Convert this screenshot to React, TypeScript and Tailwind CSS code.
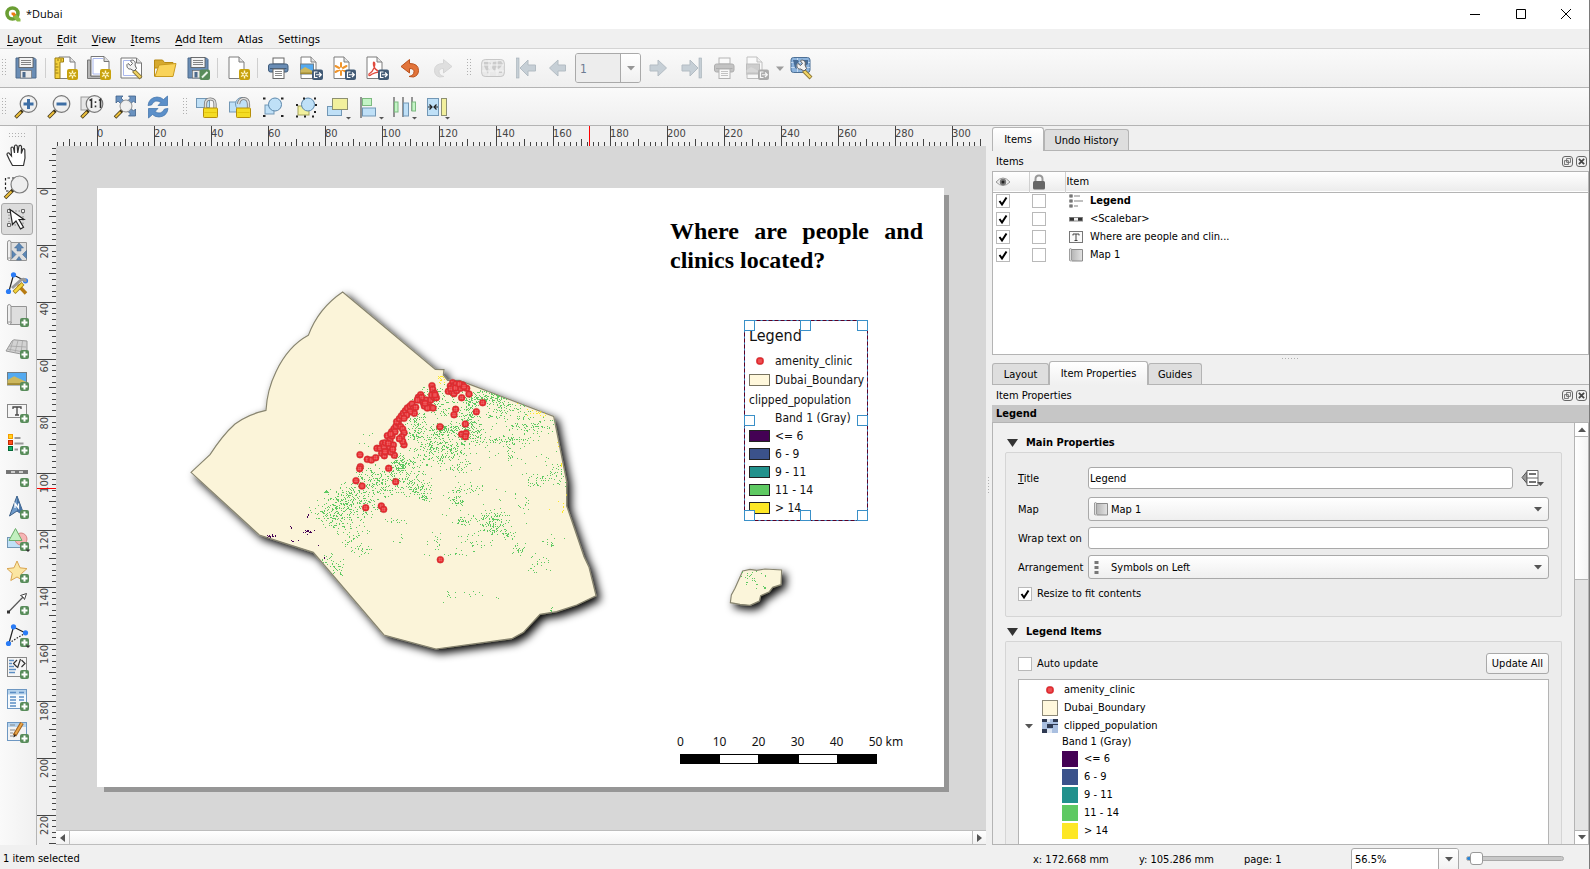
import React, { useLayoutEffect, useRef, useState } from "react";

const UI = "font-['DejaVu_Sans_Condensed','DejaVu_Sans',sans-serif]";

/* ---------- shared icon pieces ---------- */

type Kids = { children?: React.ReactNode; size?: string };

function Svg({ children, size = "size-6" }: Kids) {
  return (
    <svg viewBox="0 0 24 24" className={`${size} shrink-0 overflow-visible`} fill="none" aria-hidden="true">
      {children}
    </svg>
  );
}

const Plus = () => (
  <g>
    <rect x="15" y="15" width="9" height="9" rx="2" fill="#588c5a" />
    <path d="M19.5 16.5v6M16.5 19.5h6" stroke="#fff" strokeWidth="2" />
  </g>
);

const Star = () => (
  <g>
    <rect x="13" y="13" width="11" height="11" rx="2" fill="#c8a20e" />
    <path d="M18.5 14.5v8M15 16.5l7 4M22 16.5l-7 4" stroke="#fff6c8" strokeWidth="1.4" />
    <circle cx="18.5" cy="18.5" r="1.6" fill="#c8a20e" stroke="#fff6c8" strokeWidth="1" />
  </g>
);

const Export = () => (
  <g>
    <rect x="13" y="13.500" width="11" height="10.500" rx="2" fill="#415a75" />
    <path d="M18.500 16h-3v5.500h3M17 18.750h5M20 16.500l2.300 2.250L20 21" stroke="#fff" strokeWidth="1.2" />
  </g>
);

const Sheet = ({ x = 3, w = 15 }: { x?: number; w?: number }) => (
  <g>
    <path d={`M${x} 1h${w - 5}l5 5v16.500h-${w}z`} fill="#fff" stroke="#7d7d7d" />
    <path d={`M${x + w - 5} 1v5h5`} fill="#e4e4e4" stroke="#7d7d7d" />
  </g>
);

const Floppy = () => (
  <g>
    <path d="M2 2h18.500L22 3.500V22H2z" fill="#6a8db5" stroke="#4c6a8c" />
    <rect x="5" y="1.500" width="14" height="10" fill="#f3f3f3" stroke="#555" strokeWidth=".8" />
    <path d="M7 4.500h10M7 6.500h10M7 8.500h10" stroke="#777" strokeWidth=".9" />
    <rect x="6.500" y="14.500" width="11" height="7.500" fill="#e9e9e9" stroke="#666" strokeWidth=".6" />
    <rect x="8.500" y="16" width="3" height="5.500" fill="#4c6a8c" />
  </g>
);

const Wrench = () => (
  <g>
    <path d="M13.500 14.500l7.500 7.500" stroke="#8a7430" strokeWidth="4" />
    <path d="M14 15l6.500 6.500" stroke="#f0d264" strokeWidth="2.400" />
    <path d="M7 8.500l1-1 2.500 2 2-2-2-2.500 1-1c3 0 4.500 2.500 3.500 5l1.500 3.500-2.500 2.500-3.500-2c-2.500.5-4-2-3.500-4.500z" fill="#f2f2f2" stroke="#606060" />
  </g>
);

const Lens = () => (
  <g>
    <path d="M1.500 22.500l7-7" stroke="#413618" strokeWidth="3.600" />
    <path d="M2 22l5-5" stroke="#ecc03c" strokeWidth="2" />
    <circle cx="14.500" cy="9" r="8.300" fill="#eee" stroke="#777" strokeWidth="1.200" />
    <circle cx="13" cy="7" r="5" fill="#fafafa" opacity=".7" />
  </g>
);

const Caret = () => <path d="M19 22h5l-2.500 2.500z" fill="#555" />;

const Printer = () => (
  <g>
    <rect x="7" y="2" width="11" height="6" fill="#fff" stroke="#666" />
    <rect x="2.500" y="8" width="19.500" height="8" rx="2" fill="#6a8db5" stroke="#3f5c7c" />
    <path d="M4 12.500h16.500" stroke="#3f5c7c" />
    <rect x="7" y="13" width="11" height="9.500" fill="#fff" stroke="#666" />
    <path d="M9 15.500h7M9 17.500h7M9 19.500h7" stroke="#888" />
  </g>
);

const Photo = ({ x, y, w, h }: { x: number; y: number; w: number; h: number }) => (
  <g>
    <rect x={x} y={y} width={w} height={h} fill="#54aaf0" stroke="#6f7d86" />
    <path d={`M${x} ${y + h * 0.6}L${x + w * 0.35} ${y + h * 0.3}L${x + w} ${y + h * 0.75}V${y + h}H${x}z`} fill="#cdb85e" />
    <path d={`M${x} ${y + h * 0.85}h${w}V${y + h}H${x}z`} fill="#a08a34" />
  </g>
);

const Arrow = ({ d }: { d: string }) => <path d={d} fill="#c6cfd6" stroke="#b3bcc3" />;

const MapSheet = () => (
  <g>
    <path d="M6 3.500h15.500V21.500H5" fill="#dedede" stroke="#949494" />
    <path d="M2.500 3.500q0-2 1.700-2t1.800 2V19H3.500q-1 0-1 1.500z" fill="#efefef" stroke="#949494" />
    <path d="M2.500 3.500V20q.5 1.500 2 1.500T6.500 19" stroke="#949494" />
  </g>
);

const WorldMap = () => (
  <g>
    <rect x=".7" y="3.500" width="22.600" height="17" rx="3.500" fill="#dcdedf" stroke="#8f8f8f" />
    <path d="M3 6h6l1 2-3 3 2 3-2 4-2-4-2-4zM12 6l8-1 2 3-3 4-2 1-2-2-1 5-3-4zM18 15h3v2h-3z" fill="#96999b" />
    <path d="M1 9h22M1 15h22M8 4v16M16 4v16" stroke="#f4f4f4" strokeWidth="1" />
  </g>
);

const Nodes = ({ dotted = true }: { dotted?: boolean }) => (
  <g>
    <path d="M8.500 4L4 20M8.500 4l12 6" stroke="#222" strokeWidth="1.200" />
    {dotted && <path d="M4 20l16.500-10" stroke="#222" strokeWidth="1.200" strokeDasharray="1.500 1.500" />}
    <circle cx="8.500" cy="3.800" r="2.600" fill="#2a7cf6" />
    <circle cx="20.500" cy="9.800" r="2.600" fill="#2a7cf6" />
    <circle cx="3.500" cy="20.500" r="2.600" fill="#2a7cf6" />
  </g>
);

const Padlock = ({ open = false }: { open?: boolean }) => (
  <g>
    <path d={open ? "M10.500 9q1-5.500 5-5.500 5 0 5 6v3" : "M10.500 13V9q0-5 4.800-5t4.700 5v4"} stroke="#777" strokeWidth="3.200" />
    <path d={open ? "M10.500 9q1-5.500 5-5.500 5 0 5 6v3" : "M10.500 13V9q0-5 4.800-5t4.700 5v4"} stroke="#ddd" strokeWidth="1.600" />
    <rect x="8.500" y="13" width="14" height="9.500" rx=".8" fill="#f4dc23" stroke="#b58e0b" />
    <path d="M9.500 17.500h12" stroke="#e4c60c" strokeWidth="1" />
  </g>
);

/* ---------- toolbar definitions ---------- */

type Tool = { name: string; icon: React.ReactNode; active?: boolean; dim?: boolean };

const fileTools: Tool[] = [{ name: "Save Project", icon: <Floppy /> }];

const layoutTools: Tool[] = [
  {
    name: "New Layout",
    icon: (
      <g>
        <Sheet x={5} w={16} />
        <path d="M1 2h8.500v4H6v16.500H1z" fill="#f4d13c" stroke="#9c7e10" />
        <path d="M1.500 8h2M1.500 11h3M1.500 14h2M1.500 17h3M4 3v2M7 3v2" stroke="#80660a" strokeWidth=".8" />
        <Star />
      </g>
    ),
  },
  {
    name: "Duplicate Layout",
    icon: (
      <g>
        <path d="M.500 4h3v16h14v2.500H.500z" fill="#b5b5b5" stroke="#777" />
        <path d="M4 .500h13l5 5V20H4z" fill="#fff" stroke="#777" />
        <path d="M6 2.500h10M6 2.500V18h12" stroke="#aab8ee" />
        <path d="M17 .500v5h5" fill="#ddd" stroke="#777" />
        <Star />
      </g>
    ),
  },
  {
    name: "Layout Manager",
    icon: (
      <g>
        <path d="M1 2h15.500l5 5V22H1z" fill="#fff" stroke="#777" />
        <path d="M3.500 4.500H14M3.500 4.500V19.500H19" stroke="#aab8ee" />
        <path d="M16.500 2v5h5" fill="#ddd" stroke="#777" />
        <Wrench />
      </g>
    ),
  },
  {
    name: "Add Items from Template",
    icon: (
      <g>
        <path d="M1.500 4h8l2 2.500H20V12H1.500z" fill="#d6a92e" stroke="#b68914" />
        <path d="M2 20.500L6 9l17-1.500-3 13z" fill="#f9d35a" stroke="#c99b20" />
        <path d="M1.500 6v14.500" stroke="#b68914" />
      </g>
    ),
  },
  {
    name: "Save as Template",
    icon: (
      <g>
        <Floppy />
        <rect x="13.500" y="13.500" width="10.500" height="10.500" rx="2" fill="#588c5a" />
        <path d="M16 21.500l5.500-5.500" stroke="#e8f3e8" strokeWidth="2" />
      </g>
    ),
  },
];

const pageTools: Tool[] = [
  { name: "Add Pages", icon: <g><Sheet x={3} /><Star /></g> },
];

const exportTools: Tool[] = [
  { name: "Print Layout", icon: <Printer /> },
  { name: "Export as Image", icon: <g><Sheet x={2} /><Photo x={1.5} y={8} w={13} h={10} /><Export /></g> },
  {
    name: "Export as SVG",
    icon: (
      <g>
        <Sheet x={2} />
        <path d="M9 7v12M3.500 10l11 6M14.500 10l-11 6" stroke="#f0952c" strokeWidth="2" strokeLinecap="round" />
        <circle cx="9" cy="13" r="1.400" fill="#fff" />
        <Export />
      </g>
    ),
  },
  {
    name: "Export as PDF",
    icon: (
      <g>
        <Sheet x={2} />
        <path d="M4 18q3.500-2 5-6 1.500-4 .3-5.500T8.500 9q1 5 6 6.500 2 .5 1.500 1-2-1-6 .3T5 19.500q-1.500.5-1-1.500z" stroke="#e04a3e" strokeWidth="1.300" />
        <Export />
      </g>
    ),
  },
  {
    name: "Undo",
    icon: <path d="M3 10.500l8.500-7v4q9 0 9 7 0 5-5 6.500l-4.500-.5q5-1 5-5 0-3-4.500-3v4.500z" fill="#e2743a" stroke="#b9501c" />,
  },
  {
    name: "Redo",
    dim: true,
    icon: <path d="M21 10.500l-8.500-7v4q-9 0-9 7 0 5 5 6.500l4.500-.5q-5-1-5-5 0-3 4.500-3v4.500z" fill="#c2c6c2" stroke="#aab0aa" />,
  },
];

const atlasTools: Tool[] = [
  { name: "Preview Atlas", dim: true, icon: <WorldMap /> },
  { name: "First Feature", icon: <g><rect x="2.500" y="2" width="2.500" height="20" fill="#c6cfd6" stroke="#a2adb5" strokeWidth=".6" /><Arrow d="M6 12L14 4v5h7.500v6H14v5z" /></g> },
  { name: "Previous Feature", icon: <Arrow d="M2.500 12L11 4v5h7.500v6H11v5z" /> },
];

const atlasTools2: Tool[] = [
  { name: "Next Feature", icon: <Arrow d="M20.500 12L12 4v5H4v6h8v5z" /> },
  { name: "Last Feature", icon: <g><rect x="20" y="2" width="2.500" height="20" fill="#c6cfd6" stroke="#a2adb5" strokeWidth=".6" /><Arrow d="M19 12L11 4v5H3v6h8v5z" /></g> },
  { name: "Print Atlas", dim: true, icon: <Printer /> },
  {
    name: "Export Atlas",
    dim: true,
    icon: <g><Sheet x={2} /><Photo x={1.5} y={8} w={13} h={10} /><Export /><path d="M31 10.500h8l-4 4.500z" fill="#333" /></g>,
  },
  {
    name: "Atlas Settings",
    icon: (
      <g>
        <rect x="1" y="1.500" width="19" height="15" rx="2.500" fill="#8cb3dc" stroke="#4d7096" />
        <path d="M1 6.500h19M1 11.500h19M7.500 2v14" stroke="#dceaf8" strokeWidth=".7" />
        <path d="M3 4h5l1 2-3 3 1 4-2-1zM11 4h7v4l-4 3z" fill="#486c94" />
        <Wrench />
      </g>
    ),
  },
];

const zoomTools: Tool[] = [
  { name: "Zoom In", icon: <g><Lens /><path d="M14.500 4v10M9.500 9h10" stroke="#3d6ea5" strokeWidth="3" /></g> },
  { name: "Zoom Out", icon: <g><Lens /><path d="M9.500 9h10" stroke="#3d6ea5" strokeWidth="3" /></g> },
  {
    name: "Zoom to 100%",
    icon: (
      <g>
        <rect x="1" y="2" width="12" height="13" fill="#e6e6e6" stroke="#999" />
        <Lens />
        <path d="M9.500 5.500l2-1.200V13M19 5.500l1.500-1.200V13" stroke="#333" strokeWidth="1.600" />
        <path d="M15.500 6.200v1.800M15.500 10.500v1.800" stroke="#333" strokeWidth="1.600" />
      </g>
    ),
  },
  {
    name: "Zoom Full",
    icon: (
      <g>
        <path d="M3 1h7L8 3l3 3-3 3-3-3-2 2zM22.500 1h-7l2 2-3 3 3 3 3-3 2 2zM22.500 21h-7l2-2-3-3 3-3 3 3 2-2z" fill="#6a92c0" stroke="#3f6189" strokeWidth=".8" />
        <path d="M2 22.500l7-7" stroke="#413618" strokeWidth="3.600" />
        <path d="M2.500 22l5-5" stroke="#ecc03c" strokeWidth="2" />
        <circle cx="13" cy="11" r="6" fill="#f0f0f0" stroke="#888" opacity=".9" />
      </g>
    ),
  },
  {
    name: "Refresh View",
    icon: (
      <g fill="#5b8fc9" stroke="#3b6ea8" strokeWidth=".7">
        <path d="M2 10.500Q3 2.500 11 2q4 0 6.500 2.500L21.500 1v9.500H12L15 7.500Q9 3.500 5.500 10z" />
        <path d="M22 13.500q-1 8-9 8.500-4 0-6.500-2.500L2.500 23v-9.500H12L9 16.500q6 4 9.500-2.500z" />
      </g>
    ),
  },
];

const BlueBox = (p: { x: number; y: number; w: number; h: number }) => (
  <rect x={p.x} y={p.y} width={p.w} height={p.h} fill="#bfe0f7" stroke="#7297b5" />
);

const Corners = () => (
  <path d="M2 3.500h2.500M20 3.500h2.500M2 21h2.500M20 21h2.500" stroke="#222" strokeWidth="2" />
);

const arrangeTools: Tool[] = [
  { name: "Lock Selected Items", icon: <g><BlueBox x={1.5} y={3.5} w={13} h={9} /><Padlock /></g> },
  { name: "Unlock All Items", icon: <g><BlueBox x={1.5} y={7} w={11} h={10} /><circle cx="14" cy="9" r="6.500" fill="#bfe0f7" stroke="#7297b5" /><Padlock open /></g> },
  { name: "Group", icon: <g><BlueBox x={4} y={10} w={9} h={9} /><circle cx="14" cy="9.500" r="6.500" fill="#bfe0f7" stroke="#5c88ac" /><Corners /></g> },
  {
    name: "Ungroup",
    icon: (
      <g>
        <rect x="4" y="11" width="11" height="9" fill="#f2f09d" stroke="#a3a25a" />
        <circle cx="14" cy="9.500" r="6.500" fill="#bfe0f7" stroke="#5c88ac" />
        <path d="M2 10h2M2 21.500h2M9 3.500h2M20 3.500h2M20 17h2M18 21.500h2M10 21.500h2M21 10h2" stroke="#222" strokeWidth="2" />
      </g>
    ),
  },
  { name: "Raise", icon: <g><BlueBox x={.5} y={11.5} w={14} h={9} /><rect x="5.500" y="3.500" width="15" height="11" fill="#f2f09d" stroke="#8d9071" /><Caret /></g> },
  { name: "Align", icon: <g><path d="M1 2v21" stroke="#333" /><rect x="2.500" y="3.500" width="9" height="7" fill="#c4f4c6" stroke="#7dba80" /><BlueBox x={2.5} y={13} w={13} h={8} /><Caret /></g> },
  {
    name: "Distribute",
    icon: <g><path d="M1 2v20M10 2v20M19 2v14" stroke="#333" /><rect x="1.500" y="7" width="3.500" height="10" fill="#c4f4c6" stroke="#7dba80" /><BlueBox x={10.5} y={8} w={5} h={13} /><rect x="19" y="7" width="3.500" height="9" fill="#c4f4c6" stroke="#7dba80" /><Caret /></g>,
  },
  {
    name: "Resize",
    icon: <g><BlueBox x={1.5} y={3.5} w={11} h={17} /><path d="M2 12h3.500M12 12H8.500M3.500 9.500L6 12l-2.500 2.500M10.500 9.500L8 12l2.500 2.500" stroke="#222" strokeWidth="1.200" /><rect x="15.500" y="3.500" width="5" height="17" fill="#f2f09d" stroke="#8d9071" /><Caret /></g>,
  },
];

const HAND =
  "M7.500 22.500L4.500 17 2 11.500q0-2 2-1.500L6.500 13 6 5q1-2 2.500 0L9.500 10V3q1.500-2 2.700 0l.5 7 1.300-7q1.500-1.500 2.500.500L16.300 10.500 17.800 6q1.500-1 2 .8L20 15l-1.500 7.500z";

const toolbox: Tool[] = [
  { name: "Pan Layout", icon: <path d={HAND} fill="#fff" stroke="#333" strokeWidth="1.200" /> },
  {
    name: "Zoom",
    icon: (
      <g>
        <path d="M14 3H.500v13H8" stroke="#222" strokeWidth="1.200" strokeDasharray="2.500 2" />
        <path d="M0 23l8-8" stroke="#413618" strokeWidth="3.600" />
        <path d="M.500 22.500l6-6" stroke="#ecc03c" strokeWidth="2" />
        <circle cx="14.500" cy="9.500" r="8.500" fill="#eee" stroke="#777" strokeWidth="1.200" opacity=".95" />
      </g>
    ),
  },
  {
    name: "Select/Move Item",
    active: true,
    icon: (
      <g>
        <path d="M4 4h14v14H4z" stroke="#777" strokeDasharray="1.200 2" />
        <path d="M2.500 2.500h3v3h-3zM16.500 2.500h3v3h-3zM2.500 16.500h3v3h-3z" fill="#eee" stroke="#666" />
        <path d="M5 2.500l2.500 15 3.500-3.500 4.500 8 3-1.800L14 12.500h5z" fill="#fff" stroke="#222" strokeWidth="1.200" />
      </g>
    ),
  },
  {
    name: "Move Content",
    icon: (
      <g>
        <MapSheet />
        <path d="M14 4l4.500 5H16v3h-4V9H9.500zM7 11.500l4 4-4 4zM21.500 11.500l-4 4 4 4zM14 17.500l2.500 3.500h-5z" fill="#5b86b5" stroke="#3d6288" strokeWidth=".5" />
      </g>
    ),
  },
  {
    name: "Edit Nodes",
    icon: (
      <g>
        <Nodes dotted={false} />
        <path d="M7 17l9-8q5-2 4 2" stroke="#999" strokeWidth="3" />
        <path d="M13 14l8 8.500" stroke="#b77b12" strokeWidth="3.500" />
        <path d="M18 12.500L9 21.500" stroke="#9a7a18" strokeWidth="4" />
        <path d="M17.500 13L9.500 21" stroke="#f6d53c" strokeWidth="2.500" />
      </g>
    ),
  },
  { name: "Add Map", icon: <g><MapSheet /><Plus /></g> },
  {
    name: "Add 3D Map",
    icon: <g><path d="M1 16l6-10q2-2 4-1l11 1v9l-6 4z" fill="#d3d3d3" stroke="#999" /><path d="M4 11l17 1M2.500 14l16 3M13 5.500l-3 12M17.500 6l-1.500 12M8 5.500L5 16" stroke="#a6a6a6" strokeWidth=".8" /><Plus /></g>,
  },
  { name: "Add Picture", icon: <g><Photo x={2.5} y={5.5} w={19} h={12.5} /><Plus /></g> },
  { name: "Add Label", icon: <g><rect x="2.500" y="5.500" width="19" height="13" fill="#f6f6f6" stroke="#888" /><path d="M8 10V8h8v2M12 8v8M10 16h4" stroke="#444" strokeWidth="1.300" /><Plus /></g> },
  {
    name: "Add Legend",
    icon: (
      <g>
        <rect x="3.500" y="3.500" width="4" height="4" fill="#ffd21e" stroke="#f59b00" />
        <rect x="3.500" y="9.500" width="4" height="4" fill="#ff4c1c" stroke="#c42b00" />
        <rect x="3.500" y="15.500" width="4" height="4" fill="#11b264" stroke="#046a38" />
        <path d="M9.500 7h6M9.500 12.500h9M9.500 18.500h3.500" stroke="#999" strokeWidth="1.800" />
        <Plus />
      </g>
    ),
  },
  { name: "Add Scale Bar", icon: <g><rect x="1.500" y="7.500" width="21" height="3" fill="#ccc" stroke="#777" /><path d="M2 9h4M10 9h4M18 9h4" stroke="#555" strokeWidth="1.600" /><Plus /></g> },
  {
    name: "Add North Arrow",
    icon: <g><path d="M12 1l7.500 20L12 16l-7.500 5z" fill="#6f9bcb" stroke="#3c5f86" /><path d="M12 1v15l7.500 5z" fill="#4672a4" /><path d="M10 13V8.500l3.500 4.500V8.500" stroke="#fff" strokeWidth="1.300" /><Plus /></g>,
  },
  {
    name: "Add Shape",
    icon: <g><BlueBox x={2.5} y={10.5} w={13} h={10} /><circle cx="16" cy="12" r="6" fill="#f6b5b5" stroke="#d48383" /><path d="M10.500 1.500L17 13.500H4z" fill="#c3f0c0" stroke="#68ad68" /><Plus /><path d="M20.500 22.500h5L23 25z" fill="#333" /></g>,
  },
  {
    name: "Add Marker",
    icon: <g><path d="M12 2l3 6.800 7 .8-5.300 4.800L18.200 21.500 12 18l-6.200 3.500L7.300 14.400 2 9.600l7-.8z" fill="#fbe6a2" stroke="#d9a552" /><Plus /></g>,
  },
  { name: "Add Arrow", icon: <g><path d="M3.500 21L20 4" stroke="#555" strokeWidth="1.200" /><path d="M21.500 2.500l-2 6-1.500-2.500-2.500-1.500z" fill="#fff" stroke="#444" /><rect x="2" y="19.500" width="3" height="3" fill="#333" /><Plus /></g> },
  { name: "Add Node Item", icon: <g><Nodes /><Plus /><path d="M20.500 22.500h5L23 25z" fill="#333" /></g> },
  {
    name: "Add HTML",
    icon: <g><rect x="2.500" y="2.500" width="19" height="19" fill="#f6f6f6" stroke="#888" /><path d="M4 5.500h5M4 8.500h3M4 11.500h5M4 14.500h7M4 17.500h6" stroke="#5c8ec4" strokeWidth="1.600" /><path d="M12 5l-3.500 3.500L12 12M16.500 5L20 8.500 16.500 12M15.500 4l-3 9" stroke="#333" strokeWidth="1.200" /><Plus /></g>,
  },
  {
    name: "Add Attribute Table",
    icon: <g><rect x="2.500" y="2.500" width="19" height="19" fill="#f6fafd" stroke="#6d97c2" /><rect x="3" y="3" width="18" height="4.500" fill="#b5d2ec" /><path d="M5 5.500h6M14 5.500h5M5 10h6M14 10h5M5 13h6M14 13h5M5 16h6M5 19h6" stroke="#5c8ec4" strokeWidth="1.300" /><Plus /></g>,
  },
  {
    name: "Add Fixed Table",
    icon: <g><rect x="2.500" y="3.500" width="19" height="18" fill="#f3f3f3" stroke="#6d97c2" /><rect x="3" y="4" width="18" height="4" fill="#b5d2ec" /><path d="M5 6h5M5 11h5M5 14h3M5 17h5" stroke="#888" strokeWidth="1.200" /><path d="M9.500 16.500L17 4" stroke="#9c5f1c" strokeWidth="4" /><path d="M10.500 15L17 4" stroke="#eaa548" strokeWidth="2" /><path d="M8.500 18.500l.5-3 2 1.200z" fill="#222" /><Plus /></g>,
  },
];

/* ---------- toolbars ---------- */

function ToolRow({ tools }: { tools: Tool[] }) {
  return (
    <div className="flex">
      {tools.map((t) => (
        <button key={t.name} type="button" aria-label={t.name} className={`flex h-8 w-[33px] items-center justify-center ${t.dim ? "opacity-45 grayscale" : ""}`}>
          <Svg>{t.icon}</Svg>
        </button>
      ))}
    </div>
  );
}

const Rule = () => <div className="h-5 w-px shrink-0 bg-[#cfcfcf] mx-[3px]" />;

const dotGrid = (cols: number, rows: number) => {
  let d = "";
  for (let c = 0; c < cols; c++) for (let r = 0; r < rows; r++) d += `M${c * 3} ${r * 3}h1v1h-1z`;
  return d;
};

function Grip({ cols, rows, className = "" }: { cols: number; rows: number; className?: string }) {
  return (
    <svg width={cols * 3} height={rows * 3} className={`shrink-0 ${className}`} shapeRendering="crispEdges" aria-hidden="true">
      <path d={dotGrid(cols, rows)} fill="#b0b0b0" />
    </svg>
  );
}

const barClass = "flex shrink-0 items-center border-b border-[#b4b4b4] bg-linear-to-b from-[#fafafa] to-[#efefef]";

function Down({ className = "" }: { className?: string }) {
  return (
    <svg viewBox="0 0 8 5" className={`h-[5px] w-2 shrink-0 ${className}`} aria-hidden="true">
      <path d="M0 0h8L4 4.500z" fill="#555" />
    </svg>
  );
}

/* ---------- rulers ---------- */

const MM = 2.8485;

function useSize() {
  const ref = useRef<SVGSVGElement>(null);
  const [size, setSize] = useState({ w: 0, h: 0 });
  useLayoutEffect(() => {
    const el = ref.current;
    if (!el) return;
    const read = () => setSize({ w: el.clientWidth, h: el.clientHeight });
    read();
    const watcher = new ResizeObserver(read);
    watcher.observe(el);
    return () => watcher.disconnect();
  }, []);
  return { ref, size };
}

function HRuler() {
  const { ref, size } = useSize();
  const ticks = [];
  for (let mm = -14; 41 + mm * MM < size.w; mm += 2) {
    const x = Math.round(41 + mm * MM);
    const h = mm % 20 === 0 ? 20 : mm % 10 === 0 ? 7 : 4;
    ticks.push(<rect key={mm} x={x} y={20 - h} width="1" height={h} fill="#444" />);
    if (mm >= 0 && mm % 20 === 0 && x + 22 < size.w)
      ticks.push(<text key={`t${mm}`} x={x} y="11" fontSize="11" fill="#444">{mm}</text>);
  }
  return (
    <svg ref={ref} className="col-start-2 row-start-1 h-5 w-full min-w-0 overflow-hidden" shapeRendering="crispEdges">
      {ticks}
      <rect x="533" y="0" width="1" height="20" fill="#f00" />
    </svg>
  );
}

function VRuler() {
  const { ref, size } = useSize();
  const ticks = [];
  for (let mm = -14; 42 + mm * MM < size.h; mm += 2) {
    const y = Math.round(42 + mm * MM);
    const w = mm % 20 === 0 ? 19 : mm % 10 === 0 ? 7 : 4;
    ticks.push(<rect key={mm} x={19 - w} y={y} width={w} height="1" fill="#444" />);
    if (mm >= 0 && mm % 20 === 0 && y + 24 < size.h)
      ticks.push(
        <text key={`t${mm}`} transform={`translate(11 ${y + 1}) rotate(-90)`} textAnchor="end" fontSize="11" fill="#444">
          {mm}
        </text>
      );
  }
  return (
    <svg ref={ref} className="col-start-1 row-span-2 row-start-2 h-full w-[19px] overflow-hidden" shapeRendering="crispEdges">
      {ticks}
      <rect x="0" y="342" width="19" height="1" fill="#f00" />
    </svg>
  );
}

/* ---------- map drawing (units are thirds of a pixel) ---------- */

const BOUNDARY =
  "M33 577L90 524Q128 465 165 432Q205 402 258 391Q261 330 288 275Q325 198 385 166Q415 85 488 36L766 268L792 269L790 285L803 301L838 301L1121 409L1160 605L1160 678L1212 830L1227 862L1248 947L1190 975L1130 995L1080 1003L1030 1057L995 1076L768 1107L612 1065L400 817L238 765Z";

const ISLAND =
  "M308 93L330 88L350 91L375 87L425 90L423 134L398 142L388 155L362 167L358 183L330 196L300 193L271 188L274 165L285 145L295 122Z";

// [centre x, centre y, spread x, spread y, count]
const clusters: number[][] = [
  [925, 352, 65, 26, 170], [870, 395, 28, 60, 150], [985, 390, 60, 26, 85], [790, 448, 38, 16, 110],
  [800, 505, 65, 40, 170], [780, 370, 50, 50, 110], [862, 450, 45, 40, 110], [1060, 435, 80, 24, 75],
  [975, 478, 90, 14, 80], [705, 430, 30, 70, 150], [740, 500, 35, 40, 60], [660, 550, 26, 24, 110],
  [600, 600, 80, 45, 200], [550, 665, 50, 55, 130], [500, 655, 45, 45, 110], [460, 695, 50, 50, 150],
  [700, 615, 55, 32, 110], [515, 762, 45, 40, 50], [545, 808, 30, 20, 24], [440, 830, 16, 20, 16],
  [470, 863, 22, 25, 30], [840, 560, 35, 20, 30], [730, 650, 14, 12, 28], [825, 662, 25, 18, 36],
  [850, 723, 24, 14, 32], [930, 708, 55, 14, 55], [945, 738, 45, 26, 85], [985, 765, 22, 16, 24],
  [990, 530, 14, 34, 20], [1070, 600, 40, 22, 34], [1130, 580, 32, 38, 42], [1015, 810, 18, 22, 22],
  [1105, 785, 24, 18, 14], [1075, 850, 34, 36, 24], [870, 622, 50, 16, 20], [650, 722, 55, 8, 14],
  [700, 555, 60, 30, 40], [765, 790, 22, 34, 16], [880, 780, 50, 34, 26], [890, 950, 90, 16, 12],
  [805, 945, 10, 12, 7], [825, 822, 40, 4, 10], [1020, 660, 24, 34, 9], [438, 635, 8, 5, 14],
  [395, 690, 12, 18, 5], [1112, 987, 8, 7, 7], [660, 775, 12, 14, 5], [830, 635, 50, 6, 12],
  [850, 500, 280, 90, 110], [900, 680, 230, 180, 60], [740, 360, 20, 40, 35],
];

function scatter(groups: number[][], seed: number) {
  let s = seed;
  const rnd = () => {
    s ^= s << 13;
    s ^= s >>> 17;
    s ^= s << 5;
    return (s >>> 0) / 4294967296;
  };
  let d = "";
  for (const [cx, cy, rx, ry, n] of groups)
    for (let i = 0; i < n; i++) {
      const x = Math.round((cx + (rnd() + rnd() - 1) * rx * 1.2) / 3) * 3;
      const y = Math.round((cy + (rnd() + rnd() - 1) * ry * 1.2) / 3) * 3;
      d += `M${x} ${y}h3v3h-3z`;
    }
  return d;
}

const greenDots = scatter(clusters, 72819);
const yellowDots =
  scatter([[782, 295, 10, 14, 16], [840, 304, 12, 4, 6], [1070, 398, 32, 8, 16], [1148, 690, 4, 40, 6]], 3913) +
  "M1010 370h4v3h-4zM1131 487h3v3h-3zM1133 497h3v3h-3zM1144 549h3v12h-3zM1157 642h4v5h-4zM1134 664h3v3h-3zM1107 687h3v3h-3zM1090 408h3v3h-3zM1040 387h3v3h-3z";
const purpleDots =
  scatter([[272, 768, 16, 5, 16], [380, 755, 12, 12, 14]], 5711) +
  "M330 738h3v3h-3zM334 742h3v6h-3zM381 708h3v6h-3zM384 702h3v6h-3zM402 750h3v3h-3zM333 780h3v3h-3zM336 783h6v3h-6zM354 780h3v3h-3zM414 795h3v3h-3zM432 832h3v5h-3z";

const islandDots =
  "M305 96h3v3h-3zM302 108h3v3h-3zM320 99h3v3h-3zM320 104h3v3h-3zM316 111h3v3h-3zM320 115h3v3h-3zM317 126h6v3h-6zM317 131h3v3h-3zM333 102h3v3h-3zM330 105h3v3h-3zM327 108h3v3h-3zM336 96h3v3h-3zM348 93h3v3h-3zM363 99h3v3h-3zM375 105h3v5h-3zM336 114h3v3h-3zM342 114h3v3h-3zM336 120h3v3h-3zM342 120h3v3h-3zM345 124h3v3h-3zM348 132h5v3h-5zM348 144h3v3h-3zM369 138h3v4h-3zM373 142h4v4h-4z";

const clinics: number[][] = [
  [540, 524], [541, 560], [539, 566], [528, 602], [546, 618], [557, 683], [604, 678], [611, 688], [647, 605],
  [626, 565], [781, 839], [780, 440], [827, 388], [822, 404], [856, 432], [845, 463], [858, 460], [856, 470],
  [889, 395], [908, 368], [845, 353], [867, 342], [562, 538], [574, 540], [587, 533], [591, 505], [643, 526],
  [672, 494], [608, 490], [600, 505], [605, 520], [613, 527], [620, 512], [632, 516], [622, 467], [630, 480],
  [628, 500], [640, 495], [635, 455], [642, 446], [648, 438], [655, 430], [662, 440], [668, 447], [672, 458],
  [665, 470], [668, 484], [658, 476], [650, 425], [658, 416], [664, 408], [670, 400], [676, 392], [682, 384],
  [690, 378], [696, 372], [700, 385], [703, 400], [690, 395], [680, 405], [672, 415], [707, 382], [715, 352],
  [722, 344], [720, 360], [730, 368], [738, 360], [733, 378], [745, 372], [750, 382], [759, 384], [742, 384],
  [752, 360], [762, 352], [769, 353], [756, 317], [758, 328], [764, 340], [755, 345], [818, 308], [811, 318],
  [820, 320], [805, 334], [815, 335], [822, 341], [830, 332], [835, 320], [842, 325], [848, 315], [860, 325],
  [828, 312], [638, 508], [612, 500], [616, 488], [625, 490], [636, 468], [645, 455], [632, 462], [615, 515],
  [725, 352], [712, 360], [735, 370], [765, 345], [812, 326], [826, 324], [838, 312], [852, 320],
];

function ClinicMark({ x, y }: { x: number; y: number }) {
  return (
    <g transform={`translate(${x} ${y})`}>
      <circle r="10.500" fill="#e6262a" stroke="#b8464a" strokeWidth="1" />
      <path d="M-6 -2.500H6M-6 2.500H6M-2.500 -6V6M2.500 -6V6" stroke="#f6b6b6" strokeWidth="1.200" opacity=".7" />
    </g>
  );
}

function MapDrawing() {
  return (
    <svg className="absolute inset-0 h-full w-full" viewBox="0 0 847 599" aria-label="Map 1">
      <defs>
        <filter id="land" x="-10%" y="-10%" width="125%" height="125%">
          <feDropShadow dx="4" dy="4" stdDeviation="4" floodColor="#000" floodOpacity="1" />
        </filter>
        <filter id="isle" x="-40%" y="-40%" width="190%" height="200%">
          <feDropShadow dx="4" dy="4" stdDeviation="4" floodColor="#000" floodOpacity="1" />
        </filter>
        <clipPath id="inside"><path d={BOUNDARY} /></clipPath>
      </defs>
      <g filter="url(#land)">
        <g transform="translate(83 92) scale(0.33333)">
          <path d={BOUNDARY} fill="#fbf4d9" stroke="#87846f" strokeWidth="3.500" />
        </g>
      </g>
      <g transform="translate(83 92) scale(0.33333)">
        <g clipPath="url(#inside)" shapeRendering="crispEdges">
          <path d={greenDots} fill="#5ec962" />
          <path d={purpleDots} fill="#440154" />
          <path d={yellowDots} fill="#fde725" />
        </g>
        {clinics.map(([x, y], i) => <ClinicMark key={i} x={x} y={y} />)}
      </g>
      <g filter="url(#isle)">
        <g transform="translate(543 352) scale(0.33333)">
          <path d={ISLAND} fill="#fbf5da" stroke="#87846f" strokeWidth="3.500" />
        </g>
      </g>
      <g transform="translate(543 352) scale(0.33333)" shapeRendering="crispEdges">
        <path d={islandDots} fill="#5ec962" />
      </g>
    </svg>
  );
}

const bands = [
  { label: "<= 6", fill: "bg-[#440154]" },
  { label: "6 - 9", fill: "bg-[#3b528b]" },
  { label: "9 - 11", fill: "bg-[#21918c]" },
  { label: "11 - 14", fill: "bg-[#5ec962]" },
  { label: "> 14", fill: "bg-[#fde725]" },
];

function ClinicDot() {
  return (
    <svg viewBox="-11 -11 22 22" className="size-2" aria-hidden="true">
      <ClinicMark x={0} y={0} />
    </svg>
  );
}

const handleSpots = [
  "left-0 top-0", "left-[56px] top-0", "right-0 top-0", "left-0 top-[95px]", "right-0 top-[95px]",
  "left-0 bottom-0", "left-[56px] bottom-0", "right-0 bottom-0",
];

function MapLegend() {
  return (
    <div className="absolute left-[647px] top-[132px] h-[201px] w-[124px] bg-white pl-[5px] pt-[6px] text-[12px] text-[#111]">
      <div className="h-[26px] text-[16px] leading-[20px]">Legend</div>
      <div className="flex h-[18px] items-center gap-[5px]"><span className="flex w-[21px] justify-center"><ClinicDot /></span>amenity_clinic</div>
      <div className="flex h-[20px] items-center gap-[5px]"><span className="h-3 w-[21px] border border-[#77735f] bg-[#fff8dc]" />Dubai_Boundary</div>
      <div className="flex h-[20px] items-center">clipped_population</div>
      <div className="flex h-[16px] items-center pl-[26px]">Band 1 (Gray)</div>
      {bands.map((b) => (
        <div key={b.label} className="flex h-[18px] items-center gap-[5px] pt-px">
          <span className={`h-3 w-[21px] border border-[#222] ${b.fill}`} />
          {b.label}
        </div>
      ))}
      <svg className="absolute inset-0 h-full w-full" aria-hidden="true">
        <rect x=".5" y=".5" width="123" height="200" fill="none" stroke="#3a90c8" />
        <rect x=".5" y=".5" width="123" height="200" fill="none" stroke="#5a0028" strokeDasharray="4 2" />
      </svg>
      {handleSpots.map((s) => (
        <span key={s} className={`absolute size-[11px] border border-[#3a90c8] bg-white ${s}`} />
      ))}
    </div>
  );
}

function ScaleBar() {
  const steps = ["0", "10", "20", "30", "40", "50"];
  return (
    <div className="absolute left-[564px] top-[546px] w-[260px] font-['Noto_Sans',sans-serif] text-[12px] leading-[16px] text-[#111]">
      <div className="flex">
        {steps.map((s) => (
          <span key={s} className="flex w-[39px] justify-center whitespace-nowrap">
            {s}
            {s === "50" && <span className="w-0 overflow-visible">&nbsp;km</span>}
          </span>
        ))}
      </div>
      <div className="ml-[19px] mt-1 flex h-[10px] w-[197px] border border-black">
        {[0, 1, 2, 3, 4].map((i) => (
          <span key={i} className={`flex-1 ${i % 2 ? "border-x border-black bg-white" : "bg-black"}`} />
        ))}
      </div>
    </div>
  );
}

function LayoutCanvas() {
  return (
    <main className="grid min-h-0 min-w-0 flex-1 grid-cols-[19px_minmax(0,1fr)] grid-rows-[20px_minmax(0,1fr)_15px] border-l border-[#b4b4b4]">
      <HRuler />
      <VRuler />
      <div className="relative col-start-2 row-start-2 overflow-hidden bg-[#d7d7d7]">
        <div className="absolute left-[41px] top-[42px] h-[599px] w-[847px] bg-white shadow-[6px_6px_0_-1px_#969696]">
          <MapDrawing />
          <h1 className="absolute left-[573px] top-[29px] w-[253px] text-justify font-['Liberation_Serif',serif] text-[24px] font-bold leading-[29px] text-black">
            Where are people and clinics located?
          </h1>
          <MapLegend />
          <ScaleBar />
        </div>
      </div>
      <div className="col-start-2 row-start-3 flex border-y border-[#bdbdbd] bg-linear-to-b from-white to-[#f2f2f2]">
        <button type="button" aria-label="Scroll left" className="flex w-[14px] items-center justify-center border-r border-[#bdbdbd]">
          <svg viewBox="0 0 5 8" className="h-2 w-[5px]"><path d="M5 0v8L0 4z" fill="#555" /></svg>
        </button>
        <div className="flex-1" />
        <button type="button" aria-label="Scroll right" className="flex w-[14px] items-center justify-center border-l border-[#bdbdbd]">
          <svg viewBox="0 0 5 8" className="h-2 w-[5px]"><path d="M0 0v8l5-4z" fill="#555" /></svg>
        </button>
      </div>
    </main>
  );
}

/* ---------- docks ---------- */

function Check({ label, checked = false, text }: { label: string; checked?: boolean; text?: boolean }) {
  return (
    <label className="inline-flex items-center gap-[5px]">
      <span className="grid">
        <input type="checkbox" aria-label={text ? undefined : label} defaultChecked={checked} className="peer col-start-1 row-start-1 size-[14px] appearance-none border border-[#b9b9b9] bg-white" />
        <svg viewBox="0 0 14 14" className="pointer-events-none invisible col-start-1 row-start-1 size-[14px] peer-checked:visible" aria-hidden="true">
          <path d="M3.500 7l2.500 3.500L10.500 3.500" fill="none" stroke="#000" strokeWidth="2" />
        </svg>
      </span>
      {text && label}
    </label>
  );
}

function DockTitle({ title }: { title: string }) {
  const btn = "flex size-[11px] items-center justify-center rounded-[3px] border border-[#666]";
  return (
    <div className="flex h-5 shrink-0 items-center gap-[3px] pl-1 pr-[2px] pt-px">
      <h2 className="flex-1 pt-px">{title}</h2>
      <button type="button" aria-label={`Float ${title}`} className={btn}>
        <svg viewBox="0 0 8 8" className="size-[7px]"><path d="M3 .500h4.500V5H3zM.500 3H5v4.500H.500z" fill="#f0f0f0" stroke="#666" /></svg>
      </button>
      <button type="button" aria-label={`Close ${title}`} className={btn}>
        <svg viewBox="0 0 8 8" className="size-[7px]"><path d="M1 1l6 6M7 1L1 7" stroke="#444" strokeWidth="2" /></svg>
      </button>
    </div>
  );
}

function Tabs({ tabs, current }: { tabs: { name: string; width: string }[]; current: string }) {
  return (
    <div className="flex h-6 shrink-0 items-end border-b border-[#b4b4b4]" role="tablist">
      {tabs.map((t) =>
        t.name === current ? (
          <button key={t.name} type="button" role="tab" aria-selected="true" className={`-mb-px h-6 rounded-t-[3px] border border-b-0 border-[#b4b4b4] bg-linear-to-b from-white to-[#f0f0f0] ${t.width}`}>
            {t.name}
          </button>
        ) : (
          <button key={t.name} type="button" role="tab" aria-selected="false" className={`h-[21px] rounded-t-[3px] border border-b-0 border-[#b4b4b4] bg-[#dedede] pt-[2px] ${t.width}`}>
            {t.name}
          </button>
        )
      )}
    </div>
  );
}

const PageIcon = () => (
  <svg viewBox="0 0 14 14" className="size-[14px] shrink-0" aria-hidden="true">
    <defs>
      <linearGradient id="roll"><stop offset="0" stopColor="#b5b5b5" /><stop offset="1" stopColor="#e4e4e4" /></linearGradient>
    </defs>
    <path d="M2.500 1.500h11v11.500H2.500" fill="url(#roll)" stroke="#8a8a8a" />
    <path d="M.500 1q1-1 2 0v11q-1 1.500-2 .5z" fill="#ddd" stroke="#8a8a8a" strokeWidth=".8" />
  </svg>
);

const layoutItems = [
  {
    name: "Legend",
    icon: <svg viewBox="0 0 14 14" className="size-[14px]"><path d="M1 1h2v2H1zM1 6h2v2H1zM1 11h2v2H1z" fill="#fff" stroke="#555" strokeWidth="1.200" /><path d="M5 2h6M5 7h9M5 12h4" stroke="#aaa" strokeWidth="1.300" /></svg>,
  },
  {
    name: "<Scalebar>",
    icon: <svg viewBox="0 0 14 14" className="size-[14px]"><rect x=".5" y="5.500" width="13" height="3.500" fill="#eee" stroke="#888" /><path d="M1 7.200h4M9 7.200h4" stroke="#333" strokeWidth="3" /></svg>,
  },
  {
    name: "Where are people and clin...",
    icon: <svg viewBox="0 0 14 14" className="size-[14px]"><rect x=".5" y="1.500" width="13" height="11" fill="#fafafa" stroke="#777" /><path d="M4 5.500V4h6v1.500M7 4v6.500M5.500 10.500h3" stroke="#444" fill="none" /></svg>,
  },
  { name: "Map 1", icon: <PageIcon /> },
];

function ItemsDock() {
  return (
    <section className="flex shrink-0 flex-col">
      <Tabs current="Items" tabs={[{ name: "Items", width: "w-[52px]" }, { name: "Undo History", width: "w-[85px]" }]} />
      <DockTitle title="Items" />
      <div className="h-[184px] border border-[#b4b4b4] bg-white">
        <table className="w-full table-fixed border-collapse">
          <thead>
            <tr className="h-5 border-b border-[#b4b4b4] bg-linear-to-b from-white to-[#ececec] text-left">
              <th className="w-9 border-r border-[#d0d0d0] pl-[2px]" aria-label="Visible">
                <svg viewBox="0 0 16 12" className="h-3 w-4"><path d="M1 6q7-8 14 0-7 7-14 0z" fill="#ececec" stroke="#999" /><circle cx="8" cy="6" r="3.200" fill="#777" /><circle cx="8" cy="6" r="1.500" fill="#222" /></svg>
              </th>
              <th className="w-9 border-r border-[#d0d0d0] pl-[2px]" aria-label="Locked">
                <svg viewBox="0 0 14 16" className="h-4 w-[14px]"><path d="M3.500 8V5q0-3.500 3.500-3.500T10.500 5v3" fill="none" stroke="#999" strokeWidth="2" /><rect x="1" y="7" width="12" height="8.500" rx="1.500" fill="#666" /></svg>
              </th>
              <th className="pl-px font-normal">Item</th>
            </tr>
          </thead>
          <tbody>
            {layoutItems.map((it, i) => (
              <tr key={it.name} className="h-[18px]">
                <td className="p-0 pl-[3px] align-middle"><div className="flex items-center"><Check label={`${it.name} visible`} checked /></div></td>
                <td className="p-0 pl-[3px] align-middle"><div className="flex items-center"><Check label={`${it.name} locked`} /></div></td>
                <td className="p-0 pl-[4px]">
                  <div className={`flex items-center gap-[7px] ${i === 0 ? "font-bold" : ""}`}>{it.icon}{it.name}</div>
                </td>
              </tr>
            ))}
          </tbody>
        </table>
      </div>
    </section>
  );
}

const fieldBox = "rounded-[3px] border border-[#a9a9a9]";

function Combo({ id, value, icon }: { id: string; value: string; icon: React.ReactNode }) {
  return (
    <div className="relative flex-1">
      <select id={id} defaultValue={value} className={`h-6 w-full appearance-none bg-linear-to-b from-white to-[#efefef] pl-[22px] pt-px ${fieldBox}`}>
        <option>{value}</option>
      </select>
      <span className="pointer-events-none absolute inset-y-0 left-[6px] flex items-center">{icon}</span>
      <span className="pointer-events-none absolute inset-y-0 right-[7px] flex items-center"><Down /></span>
    </div>
  );
}

function GroupTitle({ children }: { children: string }) {
  return (
    <h3 className="flex h-5 items-center gap-2 pl-[2px] pt-[2px] font-bold">
      <svg viewBox="0 0 11 8" className="h-2 w-[11px]" aria-hidden="true"><path d="M0 0h11L5.500 8z" fill="#333" /></svg>
      {children}
    </h3>
  );
}

function FormRow({ id, label, children }: { id: string; label: React.ReactNode; children: React.ReactNode }) {
  return (
    <div className="flex items-center">
      <label htmlFor={id} className="w-[70px] shrink-0 whitespace-nowrap pt-px">{label}</label>
      {children}
    </div>
  );
}

function PropertiesDock() {
  return (
    <section className="flex min-h-0 flex-1 flex-col">
      <Tabs
        current="Item Properties"
        tabs={[{ name: "Layout", width: "w-[57px]" }, { name: "Item Properties", width: "w-[99px]" }, { name: "Guides", width: "w-[54px]" }]}
      />
      <DockTitle title="Item Properties" />
      <div className="h-[17px] shrink-0 bg-[#c6c6c6] pl-1 font-bold leading-[18px]">Legend</div>
      <div className="flex min-h-0 flex-1 border border-[#b4b4b4]">
        <div className="flex min-h-0 min-w-0 flex-1 flex-col overflow-hidden px-3 pt-[9px]">
          <GroupTitle>Main Properties</GroupTitle>
          <div className="flex h-[165px] shrink-0 flex-col rounded-[2px] border border-[#d5d5d5] bg-[#ececec] px-3 pt-[14px]">
            <FormRow id="title" label={<><u>T</u>itle</>}>
              <input id="title" defaultValue="Legend" className={`h-[22px] min-w-0 flex-1 bg-white px-px pt-px ${fieldBox}`} />
              <button type="button" aria-label="Insert expression" className="flex h-[22px] w-9 items-center justify-end pr-1">
                <svg viewBox="0 0 24 18" className="h-[18px] w-6"><path d="M1 8.500l5-6v12z" fill="#999" stroke="#555" /><path d="M6 1.500h11v15H6z" fill="#fff" stroke="#666" /><path d="M6 9h11" stroke="#666" /><path d="M8 5h7M8 13h7" stroke="#444" strokeWidth="1.500" /><path d="M16 13h7l-3.500 4z" fill="#555" /></svg>
              </button>
            </FormRow>
            <div className="mt-2"><FormRow id="map" label="Map"><Combo id="map" value="Map 1" icon={<PageIcon />} /></FormRow></div>
            <div className="mt-[6px]">
              <FormRow id="wrap" label="Wrap text on"><input id="wrap" className={`h-[22px] min-w-0 flex-1 bg-white px-px ${fieldBox}`} /></FormRow>
            </div>
            <div className="mt-[6px]">
              <FormRow id="arrangement" label="Arrangement">
                <Combo id="arrangement" value="Symbols on Left" icon={<svg viewBox="0 0 5 13" className="h-[13px] w-[5px]"><path d="M.500 0h4v3h-4zM.500 5h4v3h-4zM.500 10h4v3h-4z" fill="#777" /></svg>} />
              </FormRow>
            </div>
            <div className="mt-2 flex"><Check label="Resize to fit contents" checked text /></div>
          </div>
          <div className="pt-1"><GroupTitle>Legend Items</GroupTitle></div>
          <div className="flex min-h-0 flex-1 flex-col rounded-t-[2px] border border-b-0 border-[#d5d5d5] bg-[#ececec] px-3 pt-[11px]">
            <div className="flex shrink-0 items-center justify-between">
              <Check label="Auto update" text />
              <button type="button" className={`h-[21px] w-[63px] bg-linear-to-b from-white to-[#f0f0f0] ${fieldBox}`}>Update All</button>
            </div>
            <ul className="mt-[5px] min-h-0 flex-1 overflow-hidden border border-b-0 border-[#b4b4b4] bg-white pt-px">
              <li className="flex h-[18px] items-center gap-[6px] pl-[23px]"><span className="flex w-4 justify-center"><ClinicDot /></span>amenity_clinic</li>
              <li className="flex h-[18px] items-center gap-[6px] pl-[23px]"><span className="size-4 border border-[#8c8979] bg-[#fff8dc]" />Dubai_Boundary</li>
              <li className="flex h-[18px] items-center pl-[6px]">
                <Down className="mr-[9px]" />
                <svg viewBox="0 0 5 5" className="mr-[6px] h-[14px] w-4" preserveAspectRatio="none" shapeRendering="crispEdges" aria-hidden="true">
                  <path d="M0 0h5v5H0z" fill="#a9bfe0" />
                  <path d="M0 0h1.500v1.200H0zM3.300 0H5v1.200H3.300zM1.700 1.700h1.600v1.600H1.700zM0 3.500h1.500V5H0zM3.300 1.700H5v.6H3.300z" fill="#2f3a52" />
                  <path d="M1.500 3.500h1.500V5H1.500zM1.500 0h1v1h-1z" fill="#dde6f3" />
                </svg>
                clipped_population
              </li>
              <li className="flex h-[14px] items-center pl-[43px]">Band 1 (Gray)</li>
              {bands.map((b) => (
                <li key={b.label} className="flex h-[18px] items-center gap-[6px] pl-[43px] pt-px"><span className={`size-4 ${b.fill}`} />{b.label}</li>
              ))}
            </ul>
          </div>
        </div>
        <div className="flex w-[14px] shrink-0 flex-col border-l border-[#b4b4b4] bg-[#e4e4e4]">
          <button type="button" aria-label="Scroll up" className="flex h-[14px] items-center justify-center border-b border-[#b4b4b4] bg-white"><Down className="rotate-180" /></button>
          <div className="h-[143px] border-b border-[#b4b4b4] bg-linear-to-r from-white to-[#f4f4f4]" />
          <div className="flex-1" />
          <button type="button" aria-label="Scroll down" className="flex h-[14px] items-center justify-center border-t border-[#b4b4b4] bg-white"><Down /></button>
        </div>
      </div>
    </section>
  );
}

/* ---------- application ---------- */

const menus = [["L", "ayout"], ["E", "dit"], ["V", "iew"], ["I", "tems"], ["A", "dd Item"], ["", "Atlas"], ["", "Settings"]];

export default function App() {
  return (
    <div className={`flex h-screen flex-col overflow-hidden border-r border-[#7a7a7a] bg-[#f0f0f0] text-[11px] leading-[14px] text-black ${UI}`}>
      <header className="flex h-[29px] shrink-0 items-center bg-white pb-[2px] pl-[5px] font-['Open_Sans',sans-serif]">
        <svg viewBox="0 0 16 16" className="mr-[5px] size-4" aria-hidden="true">
          <circle cx="7.500" cy="7.500" r="5.500" fill="none" stroke="#6a9e33" strokeWidth="3.600" />
          <path d="M8 8h3l4.500 5v2.500H12L8 11z" fill="#8bbb45" />
          <path d="M6.500 6.500h3l1.500 2-2 2-2.500-2z" fill="#ee7913" />
        </svg>
        <span className="flex-1">*Dubai</span>
        <button type="button" aria-label="Minimize" className="flex h-full w-[46px] items-center justify-center"><svg viewBox="0 0 10 10" className="size-[10px]"><path d="M0 5.500h10" stroke="#000" /></svg></button>
        <button type="button" aria-label="Maximize" className="flex h-full w-[45px] items-center justify-center"><svg viewBox="0 0 10 10" className="size-[10px]"><path d="M.500.500h9v9h-9z" fill="none" stroke="#000" /></svg></button>
        <button type="button" aria-label="Close" className="flex h-full w-[46px] items-center justify-center"><svg viewBox="0 0 10 10" className="size-[10px]"><path d="M0 0l10 10M10 0L0 10" stroke="#000" /></svg></button>
      </header>

      <nav className="flex h-5 shrink-0 items-center gap-[15px] border-b border-[#d4d4d4] pl-[7px] font-['Noto_Sans',sans-serif]">
        {menus.map(([key, rest]) => (
          <button key={rest} type="button">{key && <u className="underline-offset-2">{key}</u>}{rest}</button>
        ))}
      </nav>

      <div className={`h-[39px] ${barClass}`}>
        <Grip cols={2} rows={6} className="ml-[2px] mr-px" />
        <ToolRow tools={fileTools} /><Rule />
        <ToolRow tools={layoutTools} /><Rule />
        <ToolRow tools={pageTools} /><Rule />
        <ToolRow tools={exportTools} />
        <Grip cols={2} rows={6} className="ml-[8px] mr-[3px]" />
        <ToolRow tools={atlasTools} />
        <div className={`flex h-[30px] w-[66px] shrink-0 overflow-hidden ${fieldBox}`}>
          <input aria-label="Atlas page" defaultValue="1" className="min-w-0 flex-1 bg-[#ededed] pl-1 pt-[2px] text-[12px] text-[#6d7b92]" />
          <button type="button" aria-label="Choose atlas page" className="flex w-5 items-center justify-center border-l border-[#a9a9a9] bg-linear-to-b from-white to-[#f0f0f0]"><Down className="opacity-60" /></button>
        </div>
        <ToolRow tools={atlasTools2.slice(0, 4)} />
        <div className="w-3" />
        <ToolRow tools={atlasTools2.slice(4)} />
      </div>

      <div className={`h-[38px] ${barClass}`}>
        <Grip cols={2} rows={6} className="ml-[2px] mr-px" />
        <ToolRow tools={zoomTools} />
        <Grip cols={2} rows={6} className="ml-[9px] mr-px" />
        <ToolRow tools={arrangeTools} />
      </div>

      <div className="flex min-h-0 flex-1">
        <div className="flex w-9 shrink-0 flex-col items-center bg-linear-to-r from-[#fafafa] to-[#f0f0f0] pt-[7px]">
          <Grip cols={6} rows={2} />
          {toolbox.map((t) => (
            <button
              key={t.name}
              type="button"
              aria-label={t.name}
              className={`mr-[2px] flex h-8 w-8 shrink-0 items-center justify-center rounded-[3px] border ${t.active ? "border-[#aaa] bg-[#dcdcdc]" : "border-transparent"}`}
            >
              <Svg>{t.icon}</Svg>
            </button>
          ))}
        </div>
        <LayoutCanvas />
        <div className="flex w-[6px] shrink-0 items-center justify-center"><Grip cols={1} rows={6} /></div>
        <aside className="flex w-[597px] shrink-0 flex-col pt-px">
          <ItemsDock />
          <div className="flex h-[6px] shrink-0 items-center justify-center pt-[2px]"><Grip cols={6} rows={1} /></div>
          <PropertiesDock />
        </aside>
      </div>

      <footer className="flex h-6 shrink-0 items-start overflow-hidden">
        <span className="flex-1 pl-[3px] pt-[7px]">1 item selected</span>
        <span className="w-[106px] pt-2">x: 172.668 mm</span>
        <span className="w-[105px] pt-2">y: 105.286 mm</span>
        <span className="w-[107px] pt-2">page: 1</span>
        <div className={`mt-[3px] flex h-[26px] w-[108px] shrink-0 overflow-hidden bg-white ${fieldBox}`}>
          <input aria-label="Zoom level" defaultValue="56.5%" className="mb-[2px] min-w-0 flex-1 pl-[3px]" />
          <button type="button" aria-label="Choose zoom level" className="flex w-5 items-center justify-center border-l border-[#a9a9a9] bg-linear-to-b from-white to-[#f0f0f0] pb-1"><Down /></button>
        </div>
        <input
          type="range"
          aria-label="Zoom"
          min="0"
          max="100"
          defaultValue="4"
          className="ml-[7px] mr-[25px] mt-[6px] h-[14px] w-[98px] appearance-none bg-transparent [&::-webkit-slider-runnable-track]:h-[5px] [&::-webkit-slider-runnable-track]:rounded-full [&::-webkit-slider-runnable-track]:border [&::-webkit-slider-runnable-track]:border-[#a9a9a9] [&::-webkit-slider-runnable-track]:bg-linear-to-r [&::-webkit-slider-runnable-track]:from-[#2a86d8] [&::-webkit-slider-runnable-track]:from-8% [&::-webkit-slider-runnable-track]:to-[#c8c8c8] [&::-webkit-slider-runnable-track]:to-8% [&::-webkit-slider-thumb]:-mt-[5px] [&::-webkit-slider-thumb]:size-[13px] [&::-webkit-slider-thumb]:appearance-none [&::-webkit-slider-thumb]:rounded-[3px] [&::-webkit-slider-thumb]:border [&::-webkit-slider-thumb]:border-[#999] [&::-webkit-slider-thumb]:bg-white"
        />
      </footer>
    </div>
  );
}
